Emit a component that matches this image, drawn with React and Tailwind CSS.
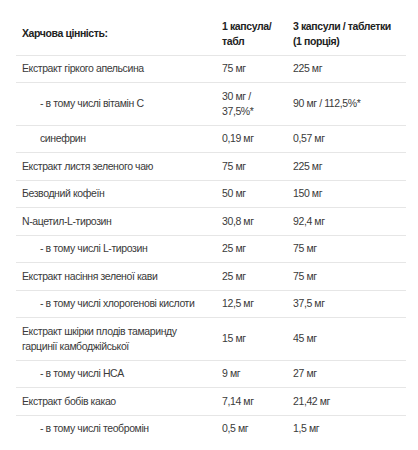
import React from 'react'

const rows = [
    { name: "Екстракт гіркого апельсина", one: "75 мг", three: "225 мг" },
    { name: "- в тому числі вітамін С", one: "30 мг / 37,5%*", three: "90 мг / 112,5%*", sub: true },
    { name: "синефрин", one: "0,19 мг", three: "0,57 мг", sub: true },
    { name: "Екстракт листя зеленого чаю", one: "75 мг", three: "225 мг" },
    { name: "Безводний кофеїн", one: "50 мг", three: "150 мг" },
    { name: "N-ацетил-L-тирозин", one: "30,8 мг", three: "92,4 мг" },
    { name: "- в тому числі L-тирозин", one: "25 мг", three: "75 мг", sub: true },
    { name: "Екстракт насіння зеленої кави", one: "25 мг", three: "75 мг" },
    { name: "- в тому числі хлорогенові кислоти", one: "12,5 мг", three: "37,5 мг", sub: true },
    { name: "Екстракт шкірки плодів тамаринду гарцинії камбоджійської", one: "15 мг", three: "45 мг" },
    { name: "- в тому числі HCA", one: "9 мг", three: "27 мг", sub: true },
    { name: "Екстракт бобів какао", one: "7,14 мг", three: "21,42 мг" },
    { name: "- в тому числі теобромін", one: "0,5 мг", three: "1,5 мг", sub: true },
];

const App = () => {
    return (
        <div className="bg-white w-[418px] h-[450px] overflow-hidden px-4 pt-[13px] font-['Liberation_Sans',Arial,sans-serif] text-[10.5px] leading-[15px] tracking-[-0.4px] text-[#3a3a3a]">
            <table className="w-[390px] table-fixed border-collapse">
                <colgroup>
                    <col className="w-[200px]" />
                    <col className="w-[71px]" />
                    <col className="w-[119px]" />
                </colgroup>
                <thead>
                    <tr className="border-b border-b-[#e6e6e6]">
                        <th className="px-[6px] py-[5.75px] text-left align-middle font-bold text-[#222]">Харчова цінність:</th>
                        <th className="px-[6px] py-[5.75px] text-left align-middle font-bold text-[#222]">1 капсула/ табл</th>
                        <th className="px-[6px] py-[5.75px] text-left align-middle font-bold text-[#222]">
                            3 капсули / таблетки<br />(1 порція)
                        </th>
                    </tr>
                </thead>
                <tbody>
                    {rows.map((row, index) => (
                        <tr key={index} className={index < rows.length - 1 ? "border-b border-b-[#e6e6e6]" : ""}>
                            <td className={`py-[5.75px] pr-[6px] align-middle ${row.sub ? "pl-[24px]" : "pl-[6px]"}`}>{row.name}</td>
                            <td className="px-[6px] py-[5.75px] align-middle">{row.one}</td>
                            <td className="px-[6px] py-[5.75px] align-middle">{row.three}</td>
                        </tr>
                    ))}
                </tbody>
            </table>
        </div>
    );
}

export default App;
